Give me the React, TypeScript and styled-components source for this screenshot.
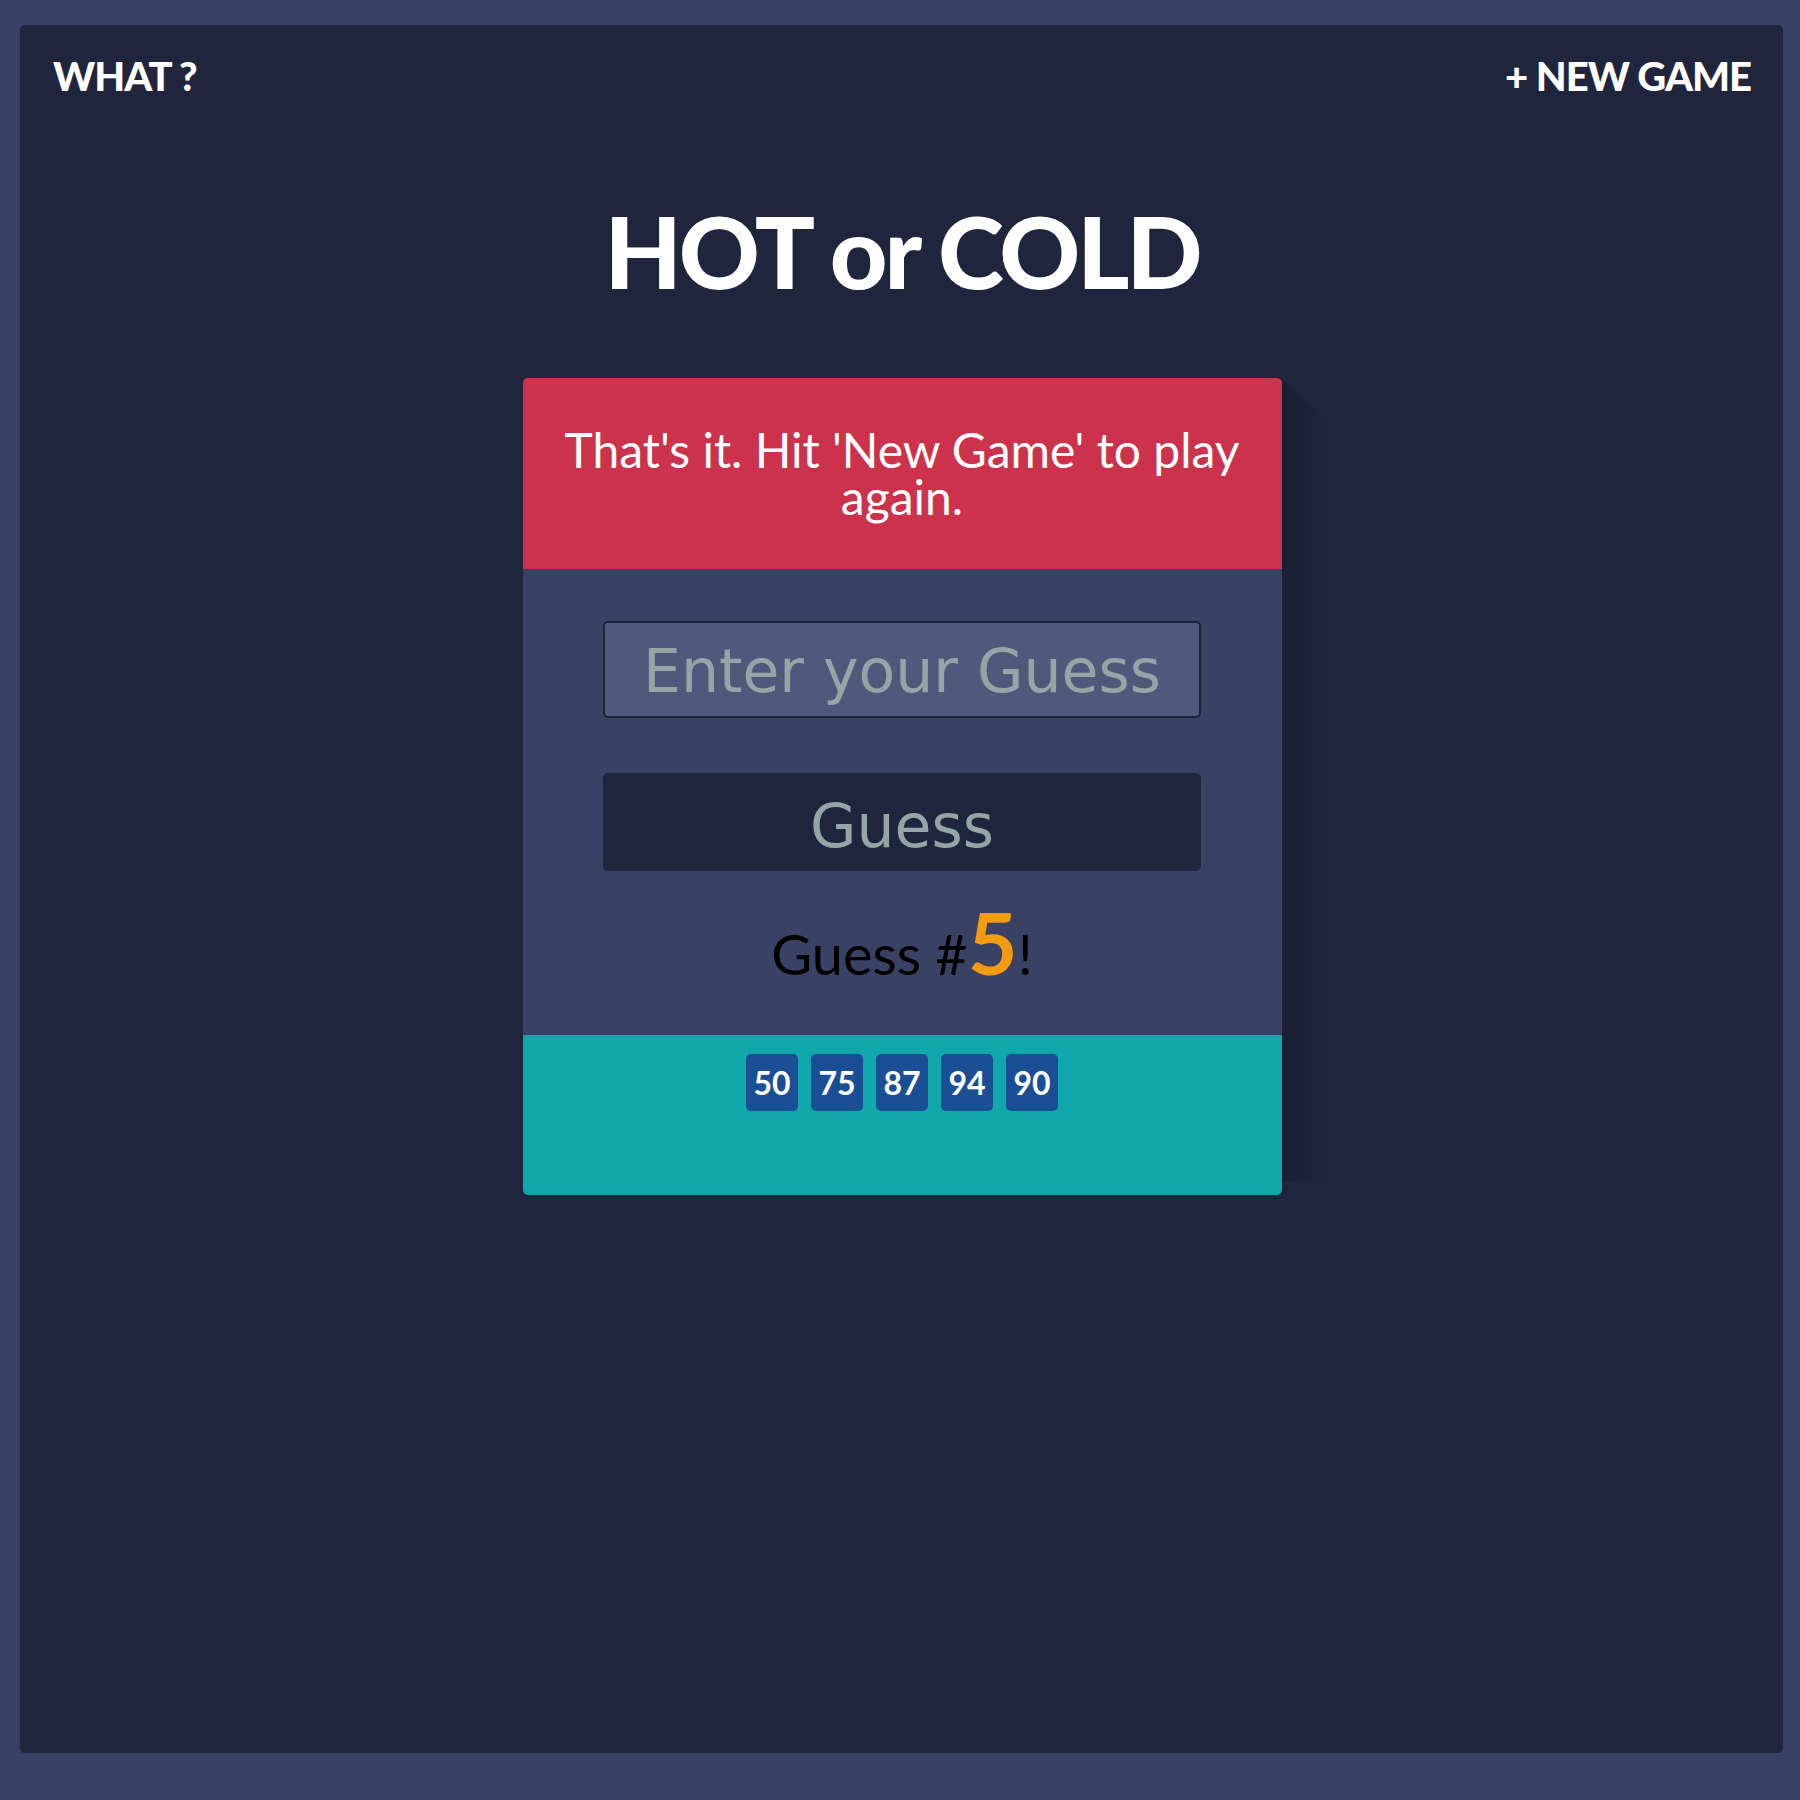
import React from "react";
import styled, { createGlobalStyle } from "styled-components";

const GlobalStyle = createGlobalStyle`
  html, body {
    margin: 0;
    padding: 0;
    background: #394264;
  }
  body {
    font-family: Lato, "Liberation Sans", sans-serif;
  }
  * {
    box-sizing: border-box;
  }
`;

const Frame = styled.div`
  margin: 25px 17px 0 20px;
  height: 1728px;
  background: #1f253d;
  border-radius: 5px;
  box-shadow: 0 2px 3px rgba(0, 0, 0, 0.12);
  padding: 27px 32px 0 33px;
  display: flex;
  flex-direction: column;
`;

const Nav = styled.nav`
  display: flex;
  justify-content: space-between;
  align-items: flex-start;
`;

const NavLink = styled.a`
  color: #fff;
  font-family: Lato, "Liberation Sans", sans-serif;
  font-weight: 900;
  font-size: 40px;
  line-height: 48px;
  letter-spacing: -1px;
  text-decoration: none;
`;

const Title = styled.h1`
  margin: 90px 0 0;
  text-align: center;
  color: #fff;
  font-family: Lato, "Liberation Sans", sans-serif;
  font-weight: 900;
  font-size: 100px;
  line-height: 120px;
  letter-spacing: -3px;
`;

const Card = styled.section`
  position: relative;
  width: 759px;
  margin: 68px auto 0;
  border-radius: 5px;

  &::after {
    content: "";
    position: absolute;
    top: 0;
    left: 100%;
    width: 46px;
    height: calc(100% - 14px);
    background: linear-gradient(to right, rgba(0, 0, 0, 0.16), rgba(0, 0, 0, 0));
    clip-path: polygon(0 0, 100% 46px, 100% 100%, 0 100%);
    pointer-events: none;
  }
`;

const Banner = styled.div`
  background: #cc324b;
  border-radius: 5px 5px 0 0;
  padding: 48px 40px 49px;
  color: #fff;
  font-family: Lato, "Liberation Sans", sans-serif;
  font-size: 48px;
  line-height: 47px;
  text-align: center;
`;

const Form = styled.form`
  background: #394264;
  padding: 52px 0 41px;
  display: flex;
  flex-direction: column;
  align-items: center;
`;

const GuessInput = styled.input`
  width: 598px;
  height: 97px;
  background: #50597b;
  border: 2px solid #1c2237;
  border-radius: 5px;
  color: #fff;
  font-family: "DejaVu Sans", Verdana, sans-serif;
  font-size: 60px;
  text-align: center;
  outline: none;
  padding: 2px 0 0;

  &::placeholder {
    color: #95a5a6;
    opacity: 1;
  }
`;

const GuessButton = styled.button`
  width: 598px;
  height: 98px;
  margin-top: 55px;
  background: #1f253d;
  border: none;
  border-radius: 5px;
  color: #95a5a6;
  font-family: "DejaVu Sans", Verdana, sans-serif;
  font-size: 60px;
  padding: 8px 0 0;
  cursor: pointer;
`;

const Count = styled.p`
  margin: 43px 0 0;
  color: #000;
  font-family: Lato, "Liberation Sans", sans-serif;
  font-size: 56px;
  line-height: 80px;
  text-align: center;
`;

const CountNumber = styled.span`
  color: #f39c12;
  font-weight: 700;
  font-size: 86px;
  line-height: 0;
`;

const History = styled.div`
  background: #11a8ab;
  border-radius: 0 0 5px 5px;
  height: 160px;
  padding-top: 19px;
  display: flex;
  justify-content: center;
  align-items: flex-start;
  gap: 13px;
`;

const Badge = styled.span`
  width: 52px;
  height: 57px;
  background: #1a4e95;
  border-radius: 5px;
  color: #fff;
  font-family: Lato, "Liberation Sans", sans-serif;
  font-weight: 700;
  font-size: 32px;
  display: flex;
  align-items: center;
  justify-content: center;
`;

const guesses = [50, 75, 87, 94, 90];

export default function App() {
  return (
    <>
      <GlobalStyle />
      <Frame>
        <Nav>
          <NavLink href="#">WHAT ?</NavLink>
          <NavLink href="#">+ NEW GAME</NavLink>
        </Nav>
        <Title>HOT or COLD</Title>
        <Card>
          <Banner>That's it. Hit 'New Game' to play again.</Banner>
          <Form onSubmit={(e) => e.preventDefault()}>
            <GuessInput type="text" placeholder="Enter your Guess" />
            <GuessButton type="submit">Guess</GuessButton>
            <Count>
              Guess #<CountNumber>5</CountNumber>!
            </Count>
          </Form>
          <History>
            {guesses.map((g) => (
              <Badge key={g}>{g}</Badge>
            ))}
          </History>
        </Card>
      </Frame>
    </>
  );
}
